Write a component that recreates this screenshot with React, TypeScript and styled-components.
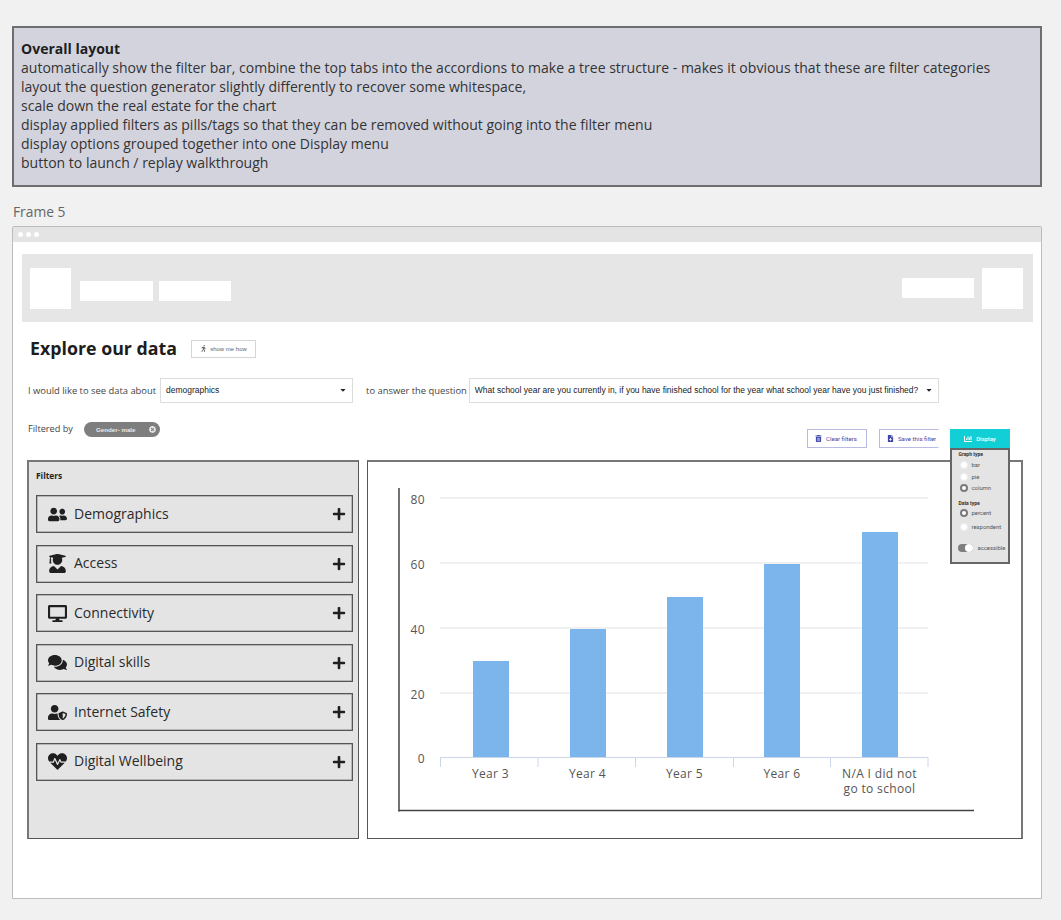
import React from "react";
import styled, { createGlobalStyle } from "styled-components";
import {
  FaUserFriends, FaUserGraduate, FaDesktop, FaComments, FaUserShield, FaHeartbeat,
  FaPlus, FaTrashAlt, FaFileMedical, FaWalking, FaChartBar, FaTimesCircle, FaCaretDown,
} from "react-icons/fa";

const Global = createGlobalStyle`
  html, body { margin: 0; padding: 0; background: #f1f1f1; }
  body { font-family: "Open Sans", "Liberation Sans", sans-serif; color: #222; }
  * { box-sizing: border-box; }
`;

const Page = styled.div`
  width: 1061px; height: 920px; overflow: hidden;
  padding: 26px 19px 0 12px;
`;
const Note = styled.section`
  height: 161px; background: #d3d3de; border: 2px solid #6e6e70;
  padding: 11px 7px; font-size: 14.03px; line-height: 19px; color: #333; white-space: nowrap;
`;
const NoteTitle = styled.div` font-weight: 700; color: #1e1e1e; `;
const FrameLabel = styled.div`
  margin: 15px 0 5px 1px; height: 19px; font-size: 13.8px; line-height: 19px; color: #666;
`;
const Frame = styled.div`
  height: 673px; background: #fff; border: 1px solid #bcbcbc; border-radius: 2px 2px 0 0;
`;
const TitleBar = styled.div`
  height: 15px; background: #e4e4e4; display: flex; align-items: center; gap: 3px; padding-left: 5px;
`;
const Dot = styled.span` width: 5px; height: 5px; border-radius: 50%; background: #fff; `;
const FrameBody = styled.div` padding: 12px 8px 0 9px; position: relative; `;
const Header = styled.header`
  height: 68px; background: #e6e6e6; display: flex; align-items: center; padding: 0 10px 0 8px;
`;
const LogoBlock = styled.div` width: 41px; height: 41px; background: #fff; `;
const NavBlock = styled.div<{ $w: number; $ml: number; $down?: boolean }>`
  width: ${(p) => p.$w}px; height: 20px; background: #fff; margin-left: ${(p) => p.$ml}px;
  margin-top: ${(p) => (p.$down ? "6px" : "0")};
`;
const Spacer = styled.div` flex: 1; `;
const UserBlock = styled(LogoBlock)` margin-left: 8px; `;

const TitleRow = styled.div` display: flex; align-items: center; margin: 17px 0 0 8px; height: 19px; `;
const H1 = styled.h1` margin: 0; font-size: 17.8px; line-height: 19px; font-weight: 700; color: #1d1d1d; `;
const WalkButton = styled.button`
  margin-left: 14px; width: 65px; height: 18px; border: 1px solid #d5d5d5; background: #fff; padding: 0;
  display: flex; align-items: center; justify-content: center; gap: 3px;
  font: 6px "Liberation Sans", sans-serif; color: #666;
`;
const QuestionRow = styled.div`
  display: flex; align-items: center; margin: 20px 0 0 6px; height: 25px;
  font-size: 9.4px; color: #444;
`;
const Select = styled.div<{ $w: number; $ml: number }>`
  width: ${(p) => p.$w}px; margin-left: ${(p) => p.$ml}px; height: 25px; background: #fff; border: 1px solid #dcdcdc; flex: none;
  display: flex; align-items: center; justify-content: space-between; padding: 0 5px 2px 5px;
  font: 8.47px "Liberation Sans", sans-serif; color: #222; white-space: nowrap;
`;
const SelectLabel = styled.span` margin-left: 13px; `;
const FilterRow = styled.div`
  display: flex; justify-content: space-between; margin: 19px 23px 0 6px; height: 26px;
`;
const Applied = styled.div` display: flex; align-items: flex-start; font-size: 9.2px; line-height: 14px; color: #444; `;
const Pill = styled.div`
  margin-left: 11px; width: 76px; height: 15px; border-radius: 8px; background: #7e7e7e; color: #e8e8e8;
  display: flex; align-items: center; justify-content: space-between; padding: 0 4px 0 12px;
  font: bold 6.2px "Liberation Sans", sans-serif;
`;
const Actions = styled.div` display: flex; align-items: flex-end; position: relative; `;
const ActionButton = styled.button<{ $ml: number; $open?: boolean }>`
  margin-left: ${(p) => p.$ml}px; width: 60px; height: 19px; background: #fff; border: 1px solid #b9bbe0; padding: 0 0 0 7px;
  border-right-color: ${(p) => (p.$open ? "transparent" : "#b9bbe0")};
  display: flex; align-items: center; gap: 4px; white-space: nowrap;
  font: 6.1px Roboto, sans-serif; color: #3f46a8;
`;
const DisplayButton = styled.button`
  margin-left: 11px; width: 60px; height: 19px; background: #12cfd6; border: 0; padding: 0;
  display: flex; align-items: center; justify-content: center; gap: 4px;
  font: 500 6px Roboto, sans-serif; color: #fff;
`;
const Menu = styled.div`
  position: absolute; right: 0; top: 26px; width: 60px; height: 116px; z-index: 2;
  background: #e4e4e4; border: 2px solid #666; padding: 2px 0 0 7.5px;
  font: 5.9px Roboto, sans-serif; color: #555;
`;
const MenuHead = styled.div<{ $mt?: number; $mb: number }>`
  margin-top: ${(p) => p.$mt ?? 0}px; margin-bottom: ${(p) => p.$mb}px; height: 5px; line-height: 5px; font-weight: 700; font-size: 5px; color: #333; margin-left: -1px;
`;
const RadioRow = styled.div<{ $h: number }>` display: flex; align-items: center; gap: 4px; height: ${(p) => p.$h}px; `;
const Radio = styled.span<{ $on?: boolean }>`
  width: 8px; height: 8px; border-radius: 50%; background: #fff; flex: none;
  border: ${(p) => (p.$on ? "2.4px solid #7a7a7a" : "1px solid #eee")};
`;
const ToggleRow = styled.div` display: flex; align-items: center; gap: 5px; margin: 10px 0 0 -2px; `;
const Toggle = styled.span`
  width: 15px; height: 8px; border-radius: 4px; background: #7e7e7e; display: flex; justify-content: flex-end; flex: none;
  &::after { content: ""; width: 8px; height: 8px; border-radius: 50%; background: #fff; }
`;

const Panels = styled.div` display: flex; gap: 8px; margin: 12px 0 0 5px; height: 379px; `;
const FilterPanel = styled.aside`
  width: 332px; background: #e4e4e4; border: 1px solid #555; border-top: 2px solid #777; border-left: 2px solid #777;
  padding: 9px 5px 0 7px;
`;
const PanelTitle = styled.div` font-size: 8.4px; font-weight: 700; line-height: 10px; color: #222; margin-bottom: 14px; `;
const Accordion = styled.div` display: flex; flex-direction: column; gap: 11.5px; `;
const AccordionRow = styled.div`
  height: 38px; border: 1px solid #555; box-shadow: inset 0 0 0 0.5px #888; display: flex; align-items: center; padding: 0 6px 0 11px;
  font-size: 14px; color: #2a2a2a;
`;
const IconSlot = styled.span` width: 26px; display: flex; flex: none; color: #1f1f1f; font-size: 19px; `;
const RowLabel = styled.span` flex: 1; margin-top: -2px; `;
const ChartPanel = styled.main`
  width: 656px; background: #fff; border: 1px solid #555; border-top: 2px solid #777; border-right: 2px solid #777;
`;
const ChartSvg = styled.svg` display: block; width: 653px; height: 376px; `;

const filters = [
  { label: "Demographics", Icon: FaUserFriends },
  { label: "Access", Icon: FaUserGraduate },
  { label: "Connectivity", Icon: FaDesktop },
  { label: "Digital skills", Icon: FaComments },
  { label: "Internet Safety", Icon: FaUserShield },
  { label: "Digital Wellbeing", Icon: FaHeartbeat },
];

const notes = [
  "automatically show the filter bar, combine the top tabs into the accordions to make a tree structure - makes it obvious that these are filter categories",
  "layout the question generator slightly differently to recover some whitespace,",
  "scale down the real estate for the chart",
  "display applied filters as pills/tags so that they can be removed without going into the filter menu",
  "display options grouped together into one Display menu",
  "button to launch / replay walkthrough",
];

const OX = 368, OY = 462;
const grid = [[80, 498], [60, 563], [40, 628], [20, 693], [0, 757]] as const;
const bars = [[473, 661], [570, 629], [667, 597], [764, 564], [862, 532]] as const;
const ticks = [440.5, 538, 635.5, 733.5, 830.5, 928];
const labels = [[490.5, "Year 3"], [587.5, "Year 4"], [684.5, "Year 5"], [782, "Year 6"]] as const;
const axisText = { fontFamily: "Open Sans, sans-serif", fontSize: 12, fill: "#555", letterSpacing: 0.35 };

function Chart() {
  return (
    <ChartSvg viewBox={`${OX} ${OY} 653 376`}>
      {grid.slice(0, 4).map(([, y]) => (
        <line key={y} x1={440} x2={928} y1={y} y2={y} stroke="#e2e2e2" strokeWidth={1.2} />
      ))}
      {grid.map(([v, y]) => (
        <text key={v} x={425} y={y + 6} textAnchor="end" {...axisText}>{v}</text>
      ))}
      {bars.map(([x, y]) => (
        <rect key={x} x={x} y={y} width={36} height={757 - y} fill="#7cb5ec" />
      ))}
      <line x1={440} x2={928} y1={757.5} y2={757.5} stroke="#ccd6eb" />
      {ticks.map((x) => (
        <line key={x} x1={x} x2={x} y1={757} y2={767} stroke="#ccd6eb" />
      ))}
      {labels.map(([x, t]) => (
        <text key={t} x={x} y={778} textAnchor="middle" {...axisText}>{t}</text>
      ))}
      <text x={879.5} y={778} textAnchor="middle" {...axisText}>N/A I did not</text>
      <text x={879.5} y={793} textAnchor="middle" {...axisText}>go to school</text>
      <line x1={399} x2={399} y1={488} y2={811.5} stroke="#444" strokeWidth={1.5} />
      <line x1={398.5} x2={974} y1={810.5} y2={810.5} stroke="#444" strokeWidth={1.5} />
    </ChartSvg>
  );
}

export default function App() {
  return (
    <Page>
      <Global />
      <Note>
        <NoteTitle>Overall layout</NoteTitle>
        {notes.map((n) => <div key={n}>{n}</div>)}
      </Note>
      <FrameLabel>Frame 5</FrameLabel>
      <Frame>
        <TitleBar><Dot /><Dot /><Dot /></TitleBar>
        <FrameBody>
          <Header>
            <LogoBlock />
            <NavBlock $w={73} $ml={9} $down />
            <NavBlock $w={72} $ml={6} $down />
            <Spacer />
            <NavBlock $w={72} $ml={0} />
            <UserBlock />
          </Header>
          <TitleRow>
            <H1>Explore our data</H1>
            <WalkButton><FaWalking size={7} /> show me how</WalkButton>
          </TitleRow>
          <QuestionRow>
            <span>I would like to see data about</span>
            <Select $w={193} $ml={4}>demographics <FaCaretDown size={8} color="#223" /></Select>
            <SelectLabel>to answer the question</SelectLabel>
            <Select $w={470} $ml={2}>
              What school year are you currently in, if you have finished school for the year what school year have you just finished?
              <FaCaretDown size={8} color="#223" />
            </Select>
          </QuestionRow>
          <FilterRow>
            <Applied>
              <span>Filtered by</span>
              <Pill>Gender- male <FaTimesCircle size={7} /></Pill>
            </Applied>
            <Actions>
              <ActionButton $ml={0}><FaTrashAlt size={7} /> Clear filters</ActionButton>
              <ActionButton $ml={12} $open><FaFileMedical size={7} /> Save this filter</ActionButton>
              <DisplayButton><FaChartBar size={8} /> Display</DisplayButton>
              <Menu>
                <MenuHead $mb={2}>Graph type</MenuHead>
                <RadioRow $h={12}><Radio />bar</RadioRow>
                <RadioRow $h={11}><Radio />pie</RadioRow>
                <RadioRow $h={12}><Radio $on />column</RadioRow>
                <MenuHead $mt={7} $mb={1}>Data type</MenuHead>
                <RadioRow $h={12}><Radio $on />percent</RadioRow>
                <RadioRow $h={15}><Radio />respondent</RadioRow>
                <ToggleRow><Toggle />accessible</ToggleRow>
              </Menu>
            </Actions>
          </FilterRow>
          <Panels>
            <FilterPanel>
              <PanelTitle>Filters</PanelTitle>
              <Accordion>
                {filters.map(({ label, Icon }) => (
                  <AccordionRow key={label}>
                    <IconSlot><Icon /></IconSlot>
                    <RowLabel>{label}</RowLabel>
                    <FaPlus size={14} color="#1f1f1f" />
                  </AccordionRow>
                ))}
              </Accordion>
            </FilterPanel>
            <ChartPanel><Chart /></ChartPanel>
          </Panels>
        </FrameBody>
      </Frame>
    </Page>
  );
}
